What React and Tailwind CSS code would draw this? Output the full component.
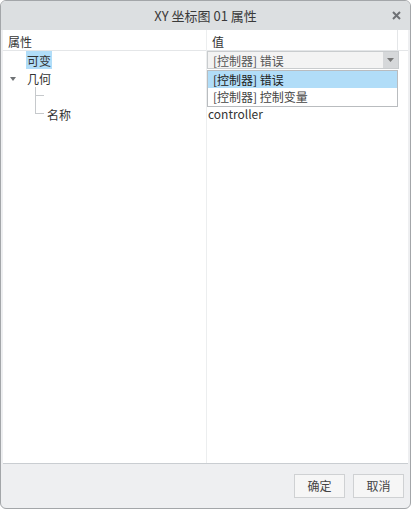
import React from 'react';

const font = { fontFamily: '"Noto Sans CJK SC", "Noto Sans", sans-serif' };

const TreeLine = ({ last }) => (
  <span className="relative inline-block w-[10px] h-[18px] ml-[32px] shrink-0">
    <span className={`absolute left-0 top-0 w-px bg-[#c6c9cc] ${last ? 'h-[9px]' : 'h-[18px]'}`} />
    <span className="absolute left-0 top-[8px] w-[9px] h-px bg-[#c6c9cc]" />
  </span>
);

const App = () => {
  return (
    <div className="w-[413px] h-[511px] bg-white text-[12px] text-[#333]" style={font}>
      <div className="w-[411px] h-[509px] flex flex-col bg-[#eeeff1] border border-[#a3a6a9] rounded-[6px] overflow-hidden">
        {/* title */}
        <div className="relative h-[29px] bg-[#dcdfe1] flex items-center justify-center shrink-0">
          <span className="text-[13px] text-[#3a3a3a]">XY 坐标图 01 属性</span>
          <svg className="absolute right-[9px] top-[10px]" width="9" height="9" viewBox="0 0 9 9">
            <path d="M1 1L8 8M8 1L1 8" stroke="#6e7175" strokeWidth="2" />
          </svg>
        </div>

        {/* property table */}
        <div className="relative flex-1 mx-[2px] bg-white border-b border-[#c9cdd1]">
          <div className="absolute left-[203px] top-0 bottom-0 w-px bg-[#eceeef]" />

          <div className="flex h-[21px] border-b border-[#e4e6e8]">
            <div className="w-[203px] pl-[5px] pt-[2px] leading-[19px]">属性</div>
            <div className="w-[192px] pl-[6px] pt-[2px] leading-[19px] border-r border-[#e4e6e8]">值</div>
          </div>

          <div className="flex h-[18px]">
            <div className="w-[203px] pl-[23px]">
              <span className="inline-block h-[18px] px-[1px] pt-[2px] leading-[16px] bg-[#b1ddf8]">可变</span>
            </div>
            <div className="w-[192px] ml-[1px] flex border border-[#c9ccce] bg-[#f3f3f3]">
              <div className="flex-1 pl-[5px] pt-[1px] leading-[16px] text-[#555]">[控制器] 错误</div>
              <div className="w-[15px] bg-[#d6d8da] flex items-center justify-center">
                <svg width="7" height="4" viewBox="0 0 7 4"><path d="M0 0H7L3.5 4Z" fill="#777" /></svg>
              </div>
            </div>
          </div>

          <div className="flex h-[18px] items-center">
            <div className="w-[203px] flex items-center">
              <svg className="ml-[7px] mr-[11px] mt-[1px]" width="6" height="4" viewBox="0 0 6 4"><path d="M0 0H6L3 4Z" fill="#6f7275" /></svg>
              <span className="pt-[2px] leading-[16px]">几何</span>
            </div>
          </div>

          <div className="flex h-[18px]">
            <div className="w-[203px] flex"><TreeLine /></div>
          </div>

          <div className="flex h-[18px]">
            <div className="w-[203px] flex items-start">
              <TreeLine last />
              <span className="ml-[2px] pt-[2px] leading-[16px]">名称</span>
            </div>
            <div className="pl-[2px] pt-[1px] leading-[16px] text-[#333]">controller</div>
          </div>

          {/* open dropdown list */}
          <div className="absolute left-[204px] top-[40px] w-[191px] border border-[#b9bcbf] bg-white">
            <div className="h-[17px] pl-[5px] pt-[1px] leading-[16px] bg-[#b1ddf8] text-[#222]">[控制器] 错误</div>
            <div className="h-[18px] pl-[5px] pt-[1px] leading-[16px] text-[#444]">[控制器] 控制变量</div>
          </div>
        </div>

        {/* footer */}
        <div className="h-[44px] shrink-0 flex items-center justify-end gap-[8px] pr-[6px]">
          <button className="w-[51px] h-[24px] bg-[#f6f6f6] border border-[#cfd1d3] text-[#444]">确定</button>
          <button className="w-[51px] h-[24px] bg-[#f6f6f6] border border-[#cfd1d3] text-[#444]">取消</button>
        </div>
      </div>
    </div>
  );
};

export default App;
